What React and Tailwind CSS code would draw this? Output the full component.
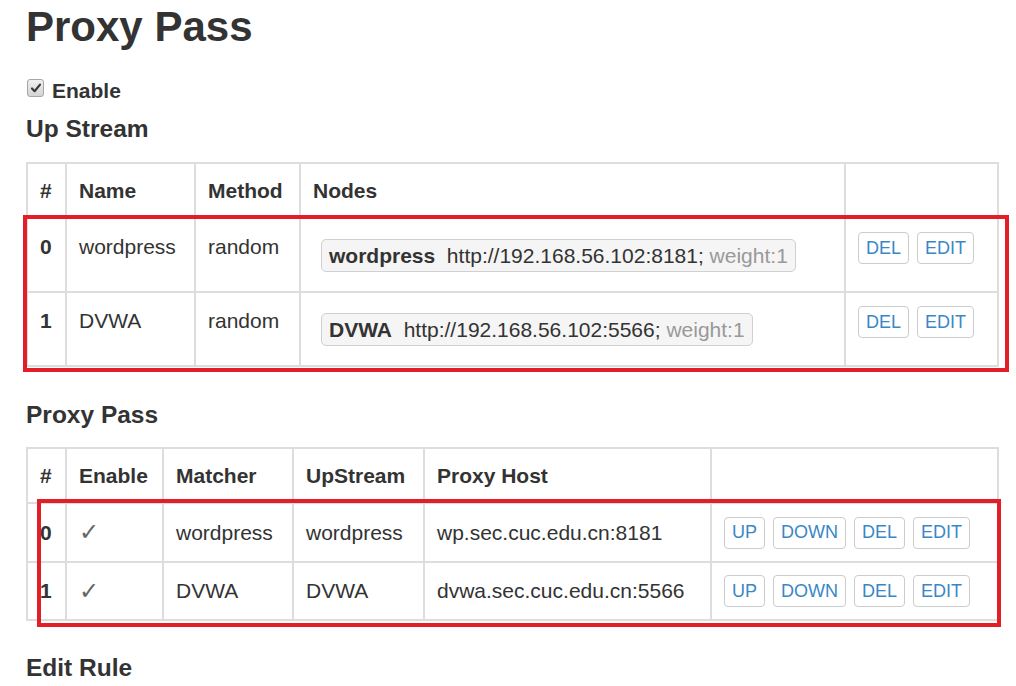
import React from "react";

const cell = "border-2 border-[#dddddd] px-[12px] align-top";

function Btn({ children }) {
  return (
    <span className="inline-flex h-[32px] items-center rounded-[4px] border border-[#cccccc] bg-white px-[7px] text-[18px] leading-[27px] text-[#3a87c6]">
      {children}
    </span>
  );
}

function NodeLabel({ name, url }) {
  return (
    <span className="inline-flex h-[33px] items-center rounded-[5px] border border-[#d0d0d0] bg-[#f5f5f5] px-[7px] text-[21px] leading-[30px] text-[#333333] whitespace-nowrap">
      <b className="font-bold">{name}</b>
      {"\u00a0 " + url + " "}
      <span className="text-[#999999]">{"\u00a0weight:1"}</span>
    </span>
  );
}

function CheckBox() {
  return (
    <span className="mt-[3px] inline-flex h-[18px] w-[17px] items-center justify-center rounded-[3px] border border-[#a6a6a6] bg-gradient-to-b from-[#f0f0f0] to-[#d4d4d4]">
      <svg width="12" height="12" viewBox="0 0 12 12">
        <path d="M2 6.5 L4.6 9.2 L10 2.6" fill="none" stroke="#3a3a3a" strokeWidth="2.2" strokeLinecap="round" strokeLinejoin="round" />
      </svg>
    </span>
  );
}

const upRows = [
  { i: 0, name: "wordpress", url: "http://192.168.56.102:8181;", h: "h-[75px]", pt: "pt-[14px]", npt: "pt-[21px]" },
  { i: 1, name: "DVWA", url: "http://192.168.56.102:5566;", h: "h-[74px]", pt: "pt-[13px]", npt: "pt-[20px]" },
];

const ppRows = [
  { i: 0, matcher: "wordpress", up: "wordpress", host: "wp.sec.cuc.edu.cn:8181", h: "h-[59px]" },
  { i: 1, matcher: "DVWA", up: "DVWA", host: "dvwa.sec.cuc.edu.cn:5566", h: "h-[58px]" },
];

export default function App() {
  return (
    <div className="relative h-[686px] w-[1016px] overflow-hidden bg-white font-['Liberation_Sans',Arial,sans-serif] text-[21px] leading-[30px] text-[#333333]">
      <div className="pl-[26px]">
        <h1 className="mt-[4px] text-[42px] font-bold leading-[46px]">Proxy Pass</h1>

        <div className="mt-[26px] flex h-[30px] items-start gap-[8px] pl-[1px]">
          <CheckBox />
          <span className="font-bold">Enable</span>
        </div>

        <h4 className="mt-[8px] text-[24.5px] font-bold leading-[30px]">Up Stream</h4>

        <table className="mt-[18px] w-[971px] table-fixed border-collapse">
          <colgroup>
            <col className="w-[39px]" />
            <col className="w-[129px]" />
            <col className="w-[105px]" />
            <col className="w-[545px]" />
            <col className="w-[153px]" />
          </colgroup>
          <thead>
            <tr className="h-[54px]">
              <th className={cell + " pt-[12px] text-left font-bold"}>#</th>
              <th className={cell + " pt-[12px] text-left font-bold"}>Name</th>
              <th className={cell + " pt-[12px] text-left font-bold"}>Method</th>
              <th className={cell + " pt-[12px] text-left font-bold"}>Nodes</th>
              <th className={cell + " pt-[12px]"}></th>
            </tr>
          </thead>
          <tbody>
            {upRows.map((r) => (
              <tr key={r.i} className={r.h}>
                <td className={cell + " " + r.pt + " font-bold"}>{r.i}</td>
                <td className={cell + " " + r.pt}>{r.name}</td>
                <td className={cell + " " + r.pt}>random</td>
                <td className={cell + " " + r.npt + " pl-[20px]"}>
                  <NodeLabel name={r.name} url={r.url} />
                </td>
                <td className={cell + " " + r.pt}>
                  <div className="flex gap-[8px]">
                    <Btn>DEL</Btn>
                    <Btn>EDIT</Btn>
                  </div>
                </td>
              </tr>
            ))}
          </tbody>
        </table>

        <h4 className="mt-[33px] text-[24.5px] font-bold leading-[30px]">Proxy Pass</h4>

        <table className="mt-[17px] w-[971px] table-fixed border-collapse">
          <colgroup>
            <col className="w-[39px]" />
            <col className="w-[97px]" />
            <col className="w-[130px]" />
            <col className="w-[131px]" />
            <col className="w-[287px]" />
            <col className="w-[287px]" />
          </colgroup>
          <thead>
            <tr className="h-[55px]">
              <th className={cell + " pt-[12px] text-left font-bold"}>#</th>
              <th className={cell + " pt-[12px] text-left font-bold"}>Enable</th>
              <th className={cell + " pt-[12px] text-left font-bold"}>Matcher</th>
              <th className={cell + " pt-[12px] text-left font-bold"}>UpStream</th>
              <th className={cell + " pt-[12px] text-left font-bold"}>Proxy Host</th>
              <th className={cell + " pt-[12px]"}></th>
            </tr>
          </thead>
          <tbody>
            {ppRows.map((r) => (
              <tr key={r.i} className={r.h}>
                <td className="border-2 border-[#dddddd] px-[12px] align-middle font-bold">{r.i}</td>
                <td className="border-2 border-[#dddddd] px-[12px] align-middle">
                  <span className="font-['DejaVu_Sans',sans-serif] text-[24px] text-[#666666]">✓</span>
                </td>
                <td className="border-2 border-[#dddddd] px-[12px] align-middle">{r.matcher}</td>
                <td className="border-2 border-[#dddddd] px-[12px] align-middle">{r.up}</td>
                <td className="border-2 border-[#dddddd] px-[12px] align-middle">{r.host}</td>
                <td className="border-2 border-[#dddddd] px-[12px] align-middle">
                  <div className="flex gap-[8px]">
                    <Btn>UP</Btn>
                    <Btn>DOWN</Btn>
                    <Btn>DEL</Btn>
                    <Btn>EDIT</Btn>
                  </div>
                </td>
              </tr>
            ))}
          </tbody>
        </table>

        <h4 className="mt-[32px] text-[24.5px] font-bold leading-[30px]">Edit Rule</h4>
      </div>

      <div className="pointer-events-none absolute left-[23px] top-[215px] h-[157px] w-[986px] border-[4px] border-[#e41e26]" />
      <div className="pointer-events-none absolute left-[37px] top-[499px] h-[128px] w-[964px] border-[4px] border-[#e41e26]" />
    </div>
  );
}
